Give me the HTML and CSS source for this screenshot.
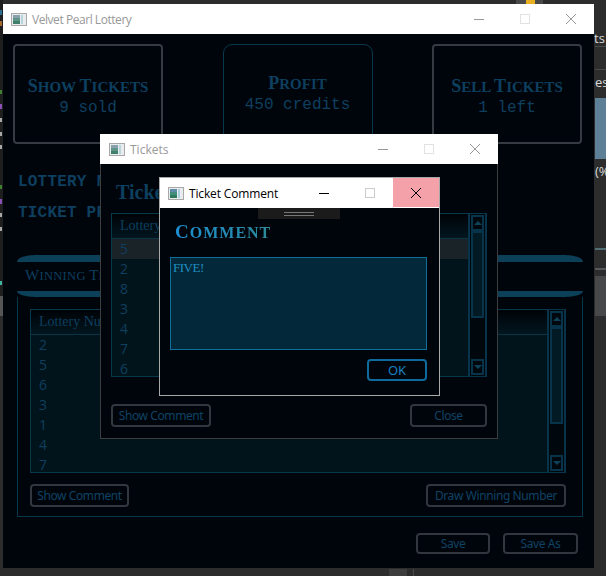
FILE: index.html
```html
<!DOCTYPE html>
<html lang="en">
  <head>
    <meta charset="UTF-8" />
    <title>Velvet Pearl Lottery</title>
    <link rel="stylesheet" href="styles.css">
  </head>
  <body>
    <div class="desktop">
      <!-- bits of whatever is open behind the app -->
      <svg class="scraps" width="606" height="576" viewBox="0 0 606 576">
        <rect x="0" y="0" width="3" height="296" fill="#1e1e1e" />
        <rect x="0" y="10" width="2" height="5" fill="#2a6f94" />
        <rect x="0" y="21" width="2" height="5" fill="#a5682c" />
        <rect x="0" y="90" width="2" height="4" fill="#3f7f30" />
        <rect x="0" y="104" width="2" height="5" fill="#8a50b8" />
        <rect x="0" y="118" width="2" height="4" fill="#a8a8a8" />
        <rect x="0" y="132" width="2" height="4" fill="#a8a8a8" />
        <rect x="0" y="145" width="2" height="4" fill="#a8a8a8" />
        <rect x="0" y="185" width="2" height="4" fill="#3f7f30" />
        <rect x="0" y="199" width="2" height="5" fill="#8a50b8" />
        <rect x="0" y="213" width="2" height="4" fill="#a8a8a8" />
        <rect x="0" y="227" width="2" height="4" fill="#a8a8a8" />
        <rect x="0" y="281" width="2" height="4" fill="#3fb6a0" />
        <rect x="0" y="296" width="3" height="20" fill="#555" />
        <rect x="516" y="0" width="27" height="4" fill="#484848" />
        <rect x="526" y="0" width="9" height="4" fill="#e8b020" />
        <rect x="595" y="46" width="11" height="1" fill="#4a4a4a" />
        <rect x="595" y="69" width="11" height="1" fill="#4a4a4a" />
        <rect x="595" y="98" width="11" height="61" fill="#5d8096" />
        <rect x="595" y="248" width="11" height="2" fill="#4f6d72" />
        <rect x="595" y="268" width="11" height="2" fill="#55585a" />
        <rect x="595" y="276" width="11" height="40" fill="#46484a" />
        <rect x="389" y="569" width="18" height="7" fill="#3d3d3d" />
        <rect x="413" y="569" width="1" height="7" fill="#4a4a4a" />
      </svg>
      <span class="scrap-text scrap-ts">ts</span>
      <span class="scrap-text scrap-ess">ess</span>
      <span class="scrap-text scrap-pct">(%</span>

      <div class="window main-window">
        <div class="titlebar">
          <svg class="app-icon" width="16" height="13" viewBox="0 0 16 13"><rect x="0.5" y="0.5" width="15" height="12" fill="#e8ecec" stroke="#a8a8a8" /><rect x="2" y="2" width="7" height="3" fill="#8aa0ac" /><rect x="2" y="5" width="7" height="3" fill="#5f9488" /><rect x="2" y="8" width="7" height="3" fill="#3f7f6c" /><rect x="10" y="2" width="2" height="9" fill="#b8d4dc" /></svg>
          <span class="title title-main">Velvet Pearl Lottery</span>
          <div class="controls">
            <span class="ctrl"><svg width="12" height="12" viewBox="0 0 12 12"><path d="M1 6.5h10" stroke="#999" /></svg></span>
            <span class="ctrl"><svg width="12" height="12" viewBox="0 0 12 12"><rect x="1.5" y="1.5" width="9" height="9" fill="none" stroke="#e2e2e2" /></svg></span>
            <span class="ctrl"><svg width="12" height="12" viewBox="0 0 12 12"><path d="M1 1l10 10M11 1L1 11" stroke="#999" /></svg></span>
          </div>
        </div>

        <div class="cards">
          <div class="card">
            <div class="card-title"><span class="cap">S</span>how <span class="cap">T</span>ickets</div>
            <div class="card-sub">9 sold</div>
          </div>
          <div class="card card-info">
            <div class="card-title"><span class="cap">P</span>rofit</div>
            <div class="card-sub">450 credits</div>
          </div>
          <div class="card">
            <div class="card-title"><span class="cap">S</span>ell <span class="cap">T</span>ickets</div>
            <div class="card-sub">1 left</div>
          </div>
        </div>

        <div class="stats">
          <div>LOTTERY NUMBERS</div>
          <div>TICKET PRICE</div>
        </div>

        <div class="tab-band tab-band-top"></div>
        <div class="tab-label"><span class="cap">W</span>inning <span class="cap">T</span>ickets</div>
        <div class="tab-band tab-band-bottom"></div>

        <div class="group">
          <div class="list list-main">
            <div class="list-body">
              <div class="list-head">Lottery Number</div>
              <div class="row">2</div>
              <div class="row">5</div>
              <div class="row">6</div>
              <div class="row">3</div>
              <div class="row">1</div>
              <div class="row">4</div>
              <div class="row">7</div>
            </div>
            <div class="scrollbar">
              <span class="sb-btn"><i class="arrow-up"></i></span>
              <span class="sb-thumb"></span>
              <span class="sb-btn"><i class="arrow-down"></i></span>
            </div>
          </div>
          <div class="btn-row">
            <button class="btn btn-show">Show Comment</button>
            <button class="btn btn-draw">Draw Winning Number</button>
          </div>
        </div>

        <div class="footer">
          <button class="btn btn-save">Save</button>
          <button class="btn btn-save-as">Save As</button>
        </div>
      </div>

      <div class="window tickets-window">
        <div class="titlebar">
          <svg class="app-icon" width="16" height="13" viewBox="0 0 16 13"><rect x="0.5" y="0.5" width="15" height="12" fill="#e8ecec" stroke="#a8a8a8" /><rect x="2" y="2" width="7" height="3" fill="#8aa0ac" /><rect x="2" y="5" width="7" height="3" fill="#5f9488" /><rect x="2" y="8" width="7" height="3" fill="#3f7f6c" /><rect x="10" y="2" width="2" height="9" fill="#b8d4dc" /></svg>
          <span class="title">Tickets</span>
          <div class="controls">
            <span class="ctrl"><svg width="12" height="12" viewBox="0 0 12 12"><path d="M1 6.5h10" stroke="#999" /></svg></span>
            <span class="ctrl"><svg width="12" height="12" viewBox="0 0 12 12"><rect x="1.5" y="1.5" width="9" height="9" fill="none" stroke="#e2e2e2" /></svg></span>
            <span class="ctrl"><svg width="12" height="12" viewBox="0 0 12 12"><path d="M1 1l10 10M11 1L1 11" stroke="#999" /></svg></span>
          </div>
        </div>
        <div class="tickets-body">
          <h2 class="tickets-heading">Tickets</h2>
          <div class="list list-tickets">
            <div class="list-body">
              <div class="list-head">Lottery Number</div>
              <div class="row row-selected">5</div>
              <div class="row">2</div>
              <div class="row">8</div>
              <div class="row">3</div>
              <div class="row">4</div>
              <div class="row">7</div>
              <div class="row">6</div>
            </div>
            <div class="scrollbar">
              <span class="sb-btn"><i class="arrow-up"></i></span>
              <span class="sb-thumb"></span>
              <span class="sb-btn"><i class="arrow-down"></i></span>
            </div>
          </div>
          <div class="btn-row btn-row-tickets">
            <button class="btn btn-show-tickets">Show Comment</button>
            <button class="btn btn-close">Close</button>
          </div>
        </div>
      </div>

      <div class="window comment-window">
        <div class="titlebar">
          <svg class="app-icon" width="16" height="13" viewBox="0 0 16 13"><rect x="0.5" y="0.5" width="15" height="12" fill="#e8ecec" stroke="#a8a8a8" /><rect x="2" y="2" width="7" height="3" fill="#5f8ca8" /><rect x="2" y="5" width="7" height="3" fill="#3f8f7c" /><rect x="2" y="8" width="7" height="3" fill="#2f7a5c" /><rect x="10" y="2" width="2" height="9" fill="#a8d0e0" /></svg>
          <span class="title title-active">Ticket Comment</span>
          <div class="controls">
            <span class="ctrl"><svg width="12" height="12" viewBox="0 0 12 12"><path d="M1 6.5h10" stroke="#000" /></svg></span>
            <span class="ctrl"><svg width="12" height="12" viewBox="0 0 12 12"><rect x="1.5" y="1.5" width="9" height="9" fill="none" stroke="#ccc" /></svg></span>
            <span class="ctrl ctrl-hot"><svg width="12" height="12" viewBox="0 0 12 12"><path d="M1 1l10 10M11 1L1 11" stroke="#000" /></svg></span>
          </div>
        </div>
        <div class="comment-body">
          <div class="drag-handle"><span></span></div>
          <h2 class="comment-heading"><span class="cap">C</span>omment</h2>
          <div class="comment-text">FIVE!</div>
          <div class="comment-actions">
            <button class="btn btn-ok">OK</button>
          </div>
        </div>
      </div>
    </div>
  </body>
</html>
```

FILE: styles.css
```css
* {
  box-sizing: border-box;
}

html,
body {
  margin: 0;
  padding: 0;
  overflow: hidden;
}

.desktop {
  position: relative;
  width: 606px;
  height: 576px;
  background-color: #2c2c2c;
  overflow: hidden;
  font-family: "Open Sans", sans-serif;
}

.scraps {
  position: absolute;
  left: 0;
  top: 0;
}

.scrap-text {
  position: absolute;
  left: 594px;
  font-size: 13px;
  line-height: 16px;
  color: #d8d8d8;
}

.scrap-ts {
  top: 30px;
}

.scrap-ess {
  top: 74px;
  left: 595px;
}

.scrap-pct {
  top: 163px;
  left: 595px;
}

.window {
  position: absolute;
  display: flex;
  flex-direction: column;
  background-color: #00050b;
}

.main-window {
  left: 3px;
  top: 4px;
  width: 591px;
  height: 564px;
}

.tickets-window {
  left: 100px;
  top: 134px;
  width: 398px;
  height: 305px;
  border: 1px solid #3c3e40;
  border-top: none;
}

.comment-window {
  left: 159px;
  top: 177px;
  width: 281px;
  height: 219px;
  border: 1px solid #a8a8a8;
}

.titlebar {
  display: flex;
  align-items: center;
  flex: none;
  height: 30px;
  background-color: #fff;
  padding-left: 8px;
}

.tickets-window .titlebar {
  margin: 0 -1px;
  padding-left: 9px;
}

.title {
  margin-left: 5px;
  font-size: 12px;
  color: #999;
}

.title-main {
  letter-spacing: -0.45px;
}

.title-active {
  letter-spacing: -0.15px;
  color: #000;
}

.controls {
  display: flex;
  margin-left: auto;
  height: 100%;
}

.ctrl {
  display: flex;
  align-items: center;
  justify-content: center;
  width: 46px;
  height: 100%;
}

.ctrl-hot {
  height: 29px;
  background-color: #f4a1a9;
}

.cards {
  display: flex;
  justify-content: space-between;
  padding: 10px 12px 0 10px;
}

.card {
  display: flex;
  flex-direction: column;
  justify-content: center;
  align-items: center;
  width: 150px;
  height: 100px;
  padding-top: 3px;
  border: 2px solid #343b42;
  border-radius: 4px;
}

.card-info {
  padding-top: 0;
  padding-bottom: 3px;
  border: 1px solid #07384b;
  border-radius: 9px;
}

/* trajan-ish caps: big first letters on smaller uppercase */
.card-title {
  font-family: "Liberation Serif", serif;
  text-transform: uppercase;
  font-weight: bold;
  font-size: 15px;
  line-height: 24px;
  color: #0d3f5f;
}

.card-title .cap {
  font-size: 18px;
}

.card-sub {
  font-family: "Liberation Mono", monospace;
  font-size: 16px;
  line-height: 18px;
  color: #0e3f5f;
}

.stats {
  margin-top: 23px;
  padding-left: 15px;
  font-family: "Liberation Mono", monospace;
  font-weight: bold;
  font-size: 16px;
  line-height: 31px;
  letter-spacing: 0.2px;
  color: #0e3f5f;
}

.tab-band {
  height: 7px;
  margin: 26px 11px 0 14px;
  background-color: #0c3f58;
  border-radius: 18px 18px 0 0 / 7px 7px 0 0;
}

.tab-band-bottom {
  height: 6px;
  margin-top: 0;
  border-radius: 0 0 18px 18px / 0 0 6px 6px;
}

.tab-label {
  height: 29px;
  margin-left: 22px;
  font-family: "Liberation Serif", serif;
  text-transform: uppercase;
  font-size: 12.5px;
  line-height: 26px;
  letter-spacing: 0.3px;
  color: #0d3f5f;
}

.tab-label .cap {
  font-size: 15px;
}

.group {
  margin: 0 11px 0 14px;
  padding: 12px 16px 9px 12px;
  border: 1px solid #07384b;
  border-top: none;
}

.list {
  display: flex;
  height: 164px;
  border: 1px solid #07384b;
  background-color: #02141b;
}

.list-body {
  flex: 1;
  overflow: hidden;
}

.list-head {
  height: 25px;
  padding-left: 8px;
  border-bottom: 1px solid #0a3444;
  background: linear-gradient(#000307, #02161f);
  font-family: "Liberation Serif", serif;
  font-size: 14px;
  line-height: 24px;
  color: #0e3f5f;
}

.row {
  height: 20px;
  padding: 2px 0 2px 8px;
  font-size: 14px;
  line-height: 16px;
  color: #0e3f5f;
}

.row:last-child {
  height: 18px;
  padding-bottom: 0;
}

.row-selected {
  background-color: #1a2328;
}

.scrollbar {
  display: flex;
  flex-direction: column;
  flex: none;
  width: 19px;
  margin: -1px -1px -1px 0;
  padding: 1px;
  border: 2px solid #07344a;
  border-width: 1px 2px;
  background-color: #00080e;
}

.sb-btn {
  display: flex;
  align-items: center;
  justify-content: center;
  flex: none;
  height: 16px;
  border: 2px solid #07344a;
}

.sb-thumb {
  flex: none;
  height: 97px;
  margin-bottom: auto;
  background-color: #021a24;
  border: 2px solid #07344a;
}

.list-tickets .sb-thumb {
  height: 87px;
}

.arrow-up,
.arrow-down {
  width: 0;
  height: 0;
  border-left: 4px solid transparent;
  border-right: 4px solid transparent;
}

.arrow-up {
  border-bottom: 4px solid #0f4258;
}

.arrow-down {
  border-top: 4px solid #0f4258;
}

.btn-row {
  display: flex;
  justify-content: space-between;
  margin-top: 11px;
}

.btn-row-tickets {
  margin-top: 27px;
}

.btn {
  height: 23px;
  padding: 0;
  background-color: transparent;
  border: 2px solid #30373e;
  border-radius: 4px;
  font-family: "Noto Sans", sans-serif;
  font-size: 12px;
  letter-spacing: -0.4px;
  color: #0f4263;
}

.btn-show {
  width: 99px;
}

.btn-draw {
  width: 140px;
}

.btn-show-tickets {
  width: 100px;
}

.btn-close {
  width: 77px;
}

.btn-save {
  width: 74px;
  height: 21px;
}

.btn-save-as {
  width: 75px;
  height: 21px;
}

.footer {
  display: flex;
  justify-content: flex-end;
  gap: 13px;
  margin-top: 16px;
  padding-right: 16px;
}

.tickets-body {
  padding: 15px 10px 0 10px;
}

.tickets-heading {
  margin: 0 0 8px 5px;
  height: 26px;
  font-family: "Liberation Serif", serif;
  font-size: 20px;
  line-height: 26px;
  color: #0d3f5f;
}

.comment-body {
  padding: 0 12px 0 10px;
}

.drag-handle {
  display: flex;
  justify-content: center;
  align-items: center;
  width: 82px;
  height: 11px;
  margin: 0 auto;
  background-color: #1b1b1b;
}

.drag-handle span {
  width: 30px;
  height: 4px;
  border-top: 1px solid #777;
  border-bottom: 1px solid #777;
}

.comment-heading {
  width: fit-content;
  height: 26px;
  margin: 0 0 12px 5px;
  font-family: "Liberation Serif", serif;
  text-transform: uppercase;
  font-size: 16px;
  line-height: 26px;
  letter-spacing: 1px;
  background: linear-gradient(90deg, #1d8fd2, #2a8a9a);
  -webkit-background-clip: text;
  background-clip: text;
  color: transparent;
}

.comment-heading .cap {
  font-size: 19px;
}

.comment-text {
  height: 93px;
  padding: 2px;
  background-color: #03283a;
  border: 1px solid #0f6f9a;
  font-family: "Liberation Serif", serif;
  font-size: 13px;
  line-height: 16px;
  letter-spacing: -0.5px;
  color: #1f8fc0;
}

.comment-actions {
  display: flex;
  justify-content: flex-end;
  margin-top: 9px;
}

.btn-ok {
  width: 60px;
  height: 22px;
  border-color: #0e6a9c;
  font-size: 13px;
  letter-spacing: 0;
  color: #1b80c2;
}
```
